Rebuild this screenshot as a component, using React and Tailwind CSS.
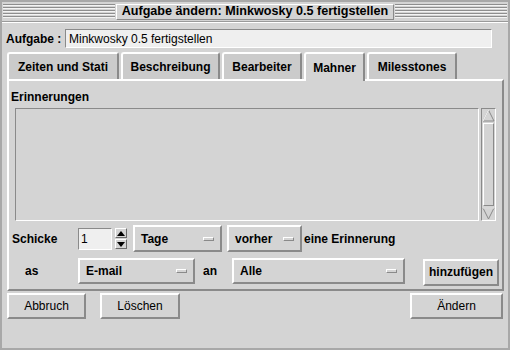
import React from 'react';

const raised = 'border-2 border-t-white border-l-white border-r-[#8a8a8a] border-b-[#8a8a8a]';

const Stripes = () => (
  <div className="flex-1 h-[15px] bg-[repeating-linear-gradient(to_bottom,#8e8e8e_0px,#8e8e8e_1px,#f4f4f4_1px,#f4f4f4_2px,#d4d4d4_2px,#d4d4d4_3px)]" />
);

const Tab = ({ label, width, active }) => (
  <div
    className={`h-[27px] flex items-center justify-center font-bold rounded-t-[3px] border-t-2 border-l-2 border-r-2 border-t-white border-l-white border-r-[#8a8a8a] ${
      active ? 'bg-[#d4d4d4] h-[29px] -mb-[2px] relative z-10' : 'bg-[#cbcbcb]'
    } ${width}`}
  >
    {label}
  </div>
);

const OptionMenu = ({ label, width }) => (
  <div className={`${raised} ${width} h-full flex items-center justify-between pl-[6px] pr-[6px] font-bold bg-[#d4d4d4]`}>
    <span>{label}</span>
    <span className="w-[11px] h-[4px] border border-t-white border-l-white border-r-[#8a8a8a] border-b-[#8a8a8a] bg-[#d4d4d4]" />
  </div>
);

const Button = ({ label, width, bold }) => (
  <div className={`${raised} ${width} h-full flex items-center justify-center ${bold ? 'font-bold' : ''}`}>
    {label}
  </div>
);

export default function App() {
  return (
    <div className="w-[510px] h-[350px] bg-[#d4d4d4] border-2 border-[#a8a8a8] flex flex-col font-['Liberation_Sans',Arial,sans-serif] text-[12px] text-black overflow-hidden leading-none">
      {/* title bar */}
      <div className="h-[19px] flex items-center px-[1px]">
        <Stripes />
        <div className="px-[5px] font-bold text-[12.6px] h-[16px] flex items-center border border-t-white border-l-white border-r-[#8a8a8a] border-b-[#8a8a8a] mx-[1px]">
          Aufgabe ändern: Minkwosky 0.5 fertigstellen
        </div>
        <Stripes />
      </div>
      <div className="h-[2px] border-t border-[#9a9a9a] border-b border-b-white" />

      {/* Aufgabe row */}
      <div className="flex items-center mt-[6px] pl-[4px] h-[19px]">
        <span className="font-bold w-[59px]">Aufgabe :</span>
        <div className="w-[427px] h-[19px] border-[1px] border-t-[#8a8a8a] border-l-[#8a8a8a] border-r-white border-b-white bg-[#efefef] flex items-center pl-[3px]">
          Minkwosky 0.5 fertigstellen
        </div>
      </div>

      {/* tabs */}
      <div className="flex items-end gap-[2px] mt-[4px] ml-[5px] h-[27px]">
        <Tab label="Zeiten und Stati" width="w-[112px]" />
        <Tab label="Beschreibung" width="w-[99px]" />
        <Tab label="Bearbeiter" width="w-[80px]" />
        <Tab label="Mahner" width="w-[61px]" active />
        <Tab label="Milesstones" width="w-[90px]" />
      </div>

      {/* panel */}
      <div className={`${raised} ml-[5px] w-[497px] h-[212px] flex flex-col`}>
        <div className="mt-[10px] ml-[2px] font-bold">Erinnerungen</div>
        <div className="flex mt-[5px] ml-[6px] h-[113px] gap-[2px]">
          <div className="w-[464px] h-full border-[1px] border-t-[#8a8a8a] border-l-[#8a8a8a] border-r-white border-b-white" />
          <div className="w-[15px] h-full border border-t-[#8a8a8a] border-l-[#8a8a8a] border-r-white border-b-white flex flex-col">
            <svg width="13" height="14" viewBox="0 0 13 14">
              <polygon points="6.5,1 12,12 1,12" fill="#d4d4d4" stroke="#8a8a8a" />
              <polyline points="1,12 6.5,1" fill="none" stroke="#ffffff" />
            </svg>
            <div className="flex-1 mx-[1px] border border-t-white border-l-white border-r-[#8a8a8a] border-b-[#8a8a8a]" />
            <svg width="13" height="14" viewBox="0 0 13 14">
              <polygon points="1,2 12,2 6.5,13" fill="#d4d4d4" stroke="#8a8a8a" />
              <polyline points="1,2 12,2" fill="none" stroke="#ffffff" />
            </svg>
          </div>
        </div>

        {/* Schicke row */}
        <div className="flex items-center mt-[4px] h-[27px] ml-[3px]">
          <span className="font-bold w-[66px]">Schicke</span>
          <div className="w-[34px] h-[22px] border-[1px] border-t-[#8a8a8a] border-l-[#8a8a8a] border-r-white border-b-white bg-[#efefef] flex items-center pl-[2px]">1</div>
          <div className="flex flex-col gap-[1px] ml-[3px]">
            <div className="w-[12px] h-[10px] border border-t-white border-l-white border-r-[#6a6a6a] border-b-[#6a6a6a] flex items-center justify-center">
              <svg width="8" height="5" viewBox="0 0 8 5"><polygon points="4,0 8,5 0,5" fill="#000" /></svg>
            </div>
            <div className="w-[12px] h-[10px] border border-t-white border-l-white border-r-[#6a6a6a] border-b-[#6a6a6a] flex items-center justify-center">
              <svg width="8" height="5" viewBox="0 0 8 5"><polygon points="0,0 8,0 4,5" fill="#000" /></svg>
            </div>
          </div>
          <div className="ml-[6px] h-full flex">
            <OptionMenu label="Tage" width="w-[89px]" />
          </div>
          <div className="ml-[5px] h-full flex">
            <OptionMenu label="vorher" width="w-[75px]" />
          </div>
          <span className="font-bold ml-[2px]">eine Erinnerung</span>
        </div>

        {/* as row */}
        <div className="flex items-center mt-[5px] h-[27px] ml-[3px]">
          <span className="font-bold w-[66px] pl-[13px]">as</span>
          <div className="h-[26px] flex">
            <OptionMenu label="E-mail" width="w-[117px]" />
          </div>
          <span className="font-bold ml-[8px] w-[29px]">an</span>
          <div className="h-[26px] flex">
            <OptionMenu label="Alle" width="w-[173px]" />
          </div>
          <div className="ml-[18px] h-[27px] mt-[3px] flex">
            <Button label="hinzufügen" width="w-[76px]" bold />
          </div>
        </div>
      </div>

      {/* bottom buttons */}
      <div className="flex mt-[2px] ml-[5px] h-[26px]">
        <Button label="Abbruch" width="w-[79px]" />
        <div className="ml-[14px] h-full flex">
          <Button label="Löschen" width="w-[80px]" />
        </div>
        <div className="ml-auto mr-[5px] h-full flex">
          <Button label="Ändern" width="w-[93px]" />
        </div>
      </div>
    </div>
  );
}
